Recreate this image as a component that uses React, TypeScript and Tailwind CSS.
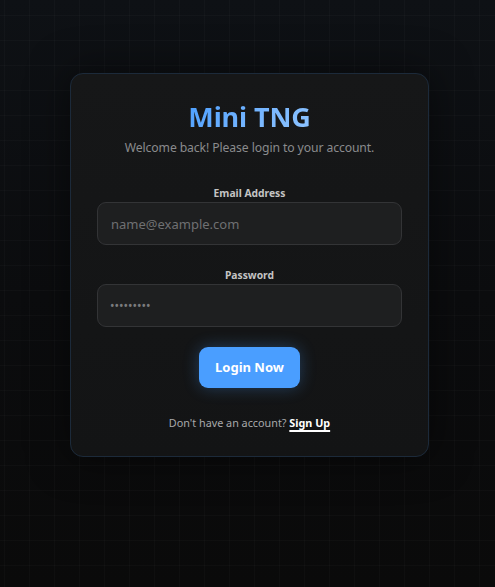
import React from "react";

export default function App() {
  return (
    <div
      className="min-h-[587px] w-full flex justify-center pt-[73px] pl-[4px] bg-[#0a0b0c] bg-[linear-gradient(rgba(255,255,255,0.018)_1px,transparent_1px),linear-gradient(90deg,rgba(255,255,255,0.018)_1px,transparent_1px),linear-gradient(180deg,#0e1115_0%,#0b0c0e_50%,#0a0a0a_100%)] bg-[size:25px_25px,25px_25px,100%_100%] bg-[position:4px_15px,4px_15px,0_0]"
      style={{ fontFamily: '"Noto Sans", "Open Sans", sans-serif' }}
    >
      <div className="w-[359px] h-[384px] rounded-[13px] border border-[#1c2a3a] bg-[linear-gradient(180deg,#161718_0%,#131415_100%)] shadow-[0_0_40px_rgba(0,0,0,0.5)] flex flex-col items-center px-[26px] pt-[25px]">
        <h1 className="text-[27px] leading-[36px] font-bold bg-[linear-gradient(135deg,#4a9eff_0%,#7ab8ff_60%,#8ec4ff_100%)] bg-clip-text text-transparent tracking-[-0.1px]">
          Mini TNG
        </h1>
        <p className="mt-[4px] text-[12.2px] leading-[18px] text-[#8a8b8d] tracking-[-0.1px]">
          Welcome back! Please login to your account.
        </p>

        <label className="mt-[29px] text-[10.3px] leading-[14px] font-bold text-[#c4c4c4]">
          Email Address
        </label>
        <input
          className="mt-[2px] w-full h-[43px] rounded-[9px] border border-[#333436] bg-[#1e1f20] px-[13px] text-[13px] text-[#ddd] placeholder:text-[#6f7072] outline-none"
          placeholder="name@example.com"
        />

        <label className="mt-[23px] text-[10.3px] leading-[14px] font-bold text-[#c4c4c4]">
          Password
        </label>
        <input
          className="mt-[2px] w-full h-[43px] rounded-[9px] border border-[#333436] bg-[#1e1f20] pl-[12px] pr-[13px] pb-[1px] text-[12px] text-[#ddd] placeholder:text-[#7a7b7d] outline-none"
          placeholder="•••••••••"
        />

        <button className="mt-[20px] w-[101px] h-[41px] rounded-[9px] bg-[#4a9eff] text-white text-[13px] font-bold shadow-[0_0_16px_rgba(74,158,255,0.3)]">
          Login Now
        </button>

        <p className="mt-[27px] text-[10.8px] leading-[16px] text-[#a8a9ab]">
          Don't have an account?{" "}
          <a className="font-bold text-white underline underline-offset-[3px] decoration-[1.5px]">
            Sign Up
          </a>
        </p>
      </div>
    </div>
  );
}
